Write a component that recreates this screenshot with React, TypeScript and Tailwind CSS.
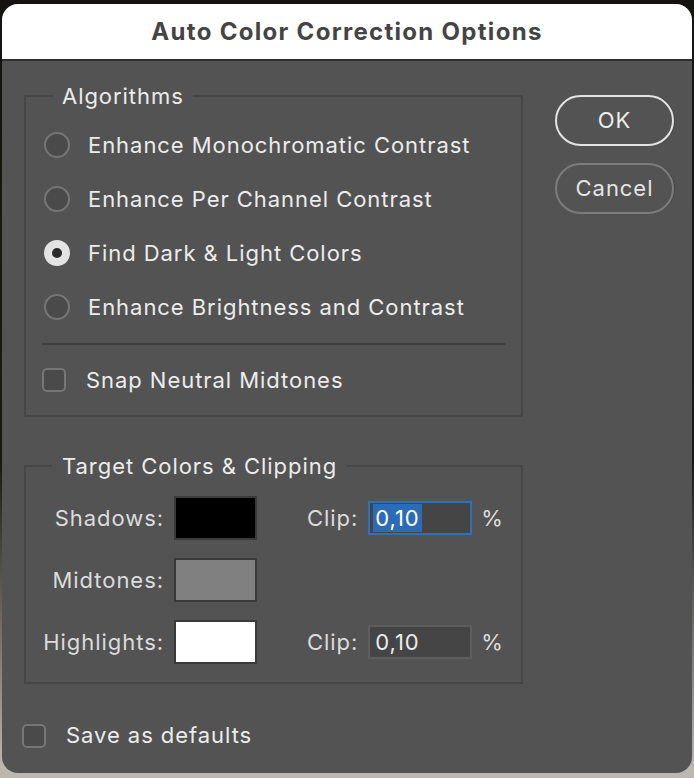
import React from 'react';

const font = { fontFamily: 'Inter, "Liberation Sans", sans-serif' };

function Radio({ label, checked }: { label: string; checked?: boolean }) {
  return (
    <div className="flex h-[54px] items-center">
      {checked ? (
        <span className="flex h-[26px] w-[26px] items-center justify-center rounded-full bg-[#e3e3e3]">
          <span className="h-[10px] w-[10px] rounded-full bg-[#2a2a2a]" />
        </span>
      ) : (
        <span className="h-[26px] w-[26px] rounded-full border-2 border-[#767676] bg-[#4a4a4a]" />
      )}
      <span className="ml-[18px] text-[22px] tracking-[0.95px] text-[#ececec]">{label}</span>
    </div>
  );
}

function Checkbox({ label }: { label: string }) {
  return (
    <div className="flex h-[54px] items-center">
      <span className="h-[24px] w-[24px] rounded-[5px] border-2 border-[#767676] bg-[#4a4a4a]" />
      <span className="ml-[20px] text-[22px] tracking-[0.95px] text-[#ececec]">{label}</span>
    </div>
  );
}

function ClipField({ focused }: { focused?: boolean }) {
  return (
    <div className="ml-[50px] flex items-center">
      <span className="text-[22px] tracking-[0.95px] text-[#dcdcdc]">Clip:</span>
      <div
        className={
          focused
            ? 'ml-[10px] flex h-[34px] w-[104px] items-center border-2 border-[#2f6fbd] bg-[#454545] pl-[3px]'
            : 'ml-[10px] flex h-[34px] w-[104px] items-center border-2 border-[#5e5e5e] bg-[#454545] pl-[3px]'
        }
      >
        <span
          className={
            focused
              ? 'bg-[#2c6cb6] px-[2px] text-[22px] leading-[28px] tracking-[0.95px] text-white'
              : 'px-[2px] text-[22px] leading-[28px] tracking-[0.95px] text-[#ececec]'
          }
        >
          0,10
        </span>
      </div>
      <span className="ml-[9px] text-[22px] text-[#dcdcdc]">%</span>
    </div>
  );
}

function ColorRow({ label, swatch, clip }: { label: string; swatch: string; clip?: 'focused' | 'plain' }) {
  return (
    <div className="flex h-[44px] items-center">
      <span className="w-[138px] text-right text-[22px] tracking-[0.95px] text-[#dcdcdc]">{label}</span>
      <span className={`ml-[10px] h-[44px] w-[83px] border-2 border-[#3a3a3a] ${swatch}`} />
      {clip && <ClipField focused={clip === 'focused'} />}
    </div>
  );
}

export default function App() {
  return (
    <div
      className="h-[778px] w-[694px] overflow-hidden bg-[linear-gradient(to_bottom,#15130f_0%,#1d1a15_60%,#bdb8ae_99%)] pl-[2px] pt-[4px]"
      style={font}
    >
      <div className="flex h-[769px] w-[690px] flex-col overflow-hidden rounded-[16px] bg-[#535353]">
        <div className="flex h-[57px] shrink-0 items-center justify-center border-b-2 border-[#2f2f2f] bg-white">
          <span className="text-[24px] font-bold tracking-[1.3px] text-[#444444]">Auto Color Correction Options</span>
        </div>

        <div className="flex pl-[22px]">
          <div className="w-[499px]">
            <fieldset className="mt-[22px] border-2 border-[#464646] px-[16px] pb-[8px]">
              <legend className="ml-[11px] px-[9px] text-[22px] leading-[26px] tracking-[0.95px] text-[#ececec]">
                Algorithms
              </legend>
              <div className="mt-[9px] pl-[2px]">
                <Radio label="Enhance Monochromatic Contrast" />
                <Radio label="Enhance Per Channel Contrast" />
                <Radio label="Find Dark & Light Colors" checked />
                <Radio label="Enhance Brightness and Contrast" />
              </div>
              <div className="mt-[9px] h-[2px] bg-[#3f3f3f]" />
              <div className="mt-[8px]">
                <Checkbox label="Snap Neutral Midtones" />
              </div>
            </fieldset>

            <fieldset className="mt-[36px] border-2 border-[#464646] pb-[18px]">
              <legend className="ml-[26px] px-[10px] text-[22px] leading-[26px] tracking-[0.95px] text-[#ececec]">
                Target Colors &amp; Clipping
              </legend>
              <div className="mt-[17px] flex flex-col gap-[18px]">
                <ColorRow label="Shadows:" swatch="bg-black" clip="focused" />
                <ColorRow label="Midtones:" swatch="bg-[#808080]" />
                <ColorRow label="Highlights:" swatch="bg-white" clip="plain" />
              </div>
            </fieldset>
          </div>

          <div className="ml-[32px] mt-[34px] flex flex-col gap-[17px]">
            <button className="h-[51px] w-[119px] rounded-full border-2 border-[#e4e4e4] text-[22px] tracking-[0.95px] text-[#ececec] shadow-[1px_0_0_#464646]">
              OK
            </button>
            <button className="h-[51px] w-[119px] rounded-full border-2 border-[#7c7c7c] text-[22px] tracking-[0.95px] text-[#e4e4e4] shadow-[1px_0_0_#464646]">
              Cancel
            </button>
          </div>
        </div>

        <div className="mt-[35px] flex items-center pl-[20px]">
          <span className="h-[24px] w-[24px] rounded-[5px] border-2 border-[#767676] bg-[#4a4a4a]" />
          <span className="ml-[20px] text-[22px] tracking-[0.95px] text-[#ececec]">Save as defaults</span>
        </div>
      </div>
    </div>
  );
}
